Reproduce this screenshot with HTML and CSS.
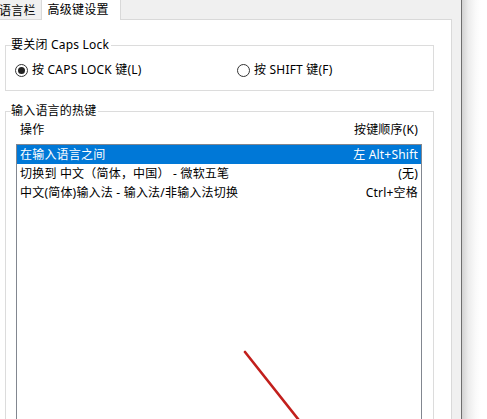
FILE: index.html
```html
<!doctype html>
<html>
	<head>
		<meta charset="utf-8"/>
		<meta name="viewport" content="width=device-width, initial-scale=1" />
		<link rel="stylesheet" href="styles.css">
	</head>
	<body>
		<div class="window">
			<div class="dialog">
				<div class="tabs">
					<div class="tab">语言栏</div>
					<div class="tab tab-active">高级键设置</div>
				</div>
				<div class="page">
					<fieldset class="group">
						<legend>要关闭 Caps Lock</legend>
						<div class="radios">
							<div class="radio-item">
								<span class="radio checked"></span>
								<span>按 CAPS LOCK 键(L)</span>
							</div>
							<div class="radio-item">
								<span class="radio"></span>
								<span>按 SHIFT 键(F)</span>
							</div>
						</div>
					</fieldset>

					<fieldset class="group group-keys">
						<legend>输入语言的热键</legend>
						<div class="list-head">
							<span>操作</span>
							<span>按键顺序(K)</span>
						</div>
						<div class="list">
							<div class="row selected">
								<span>在输入语言之间</span>
								<span>左 Alt+Shift</span>
							</div>
							<div class="row">
								<span>切换到 中文（简体，中国） - 微软五笔</span>
								<span>(无)</span>
							</div>
							<div class="row">
								<span>中文(简体)输入法 - 输入法/非输入法切换</span>
								<span>Ctrl+空格</span>
							</div>
						</div>
					</fieldset>
				</div>
			</div>
			<div class="shade"></div>
		</div>

		<!-- annotation arrow drawn over the screenshot -->
		<svg class="arrow" width="487" height="419" viewBox="0 0 487 419">
			<line x1="245" y1="352" x2="302" y2="424" stroke="#c21f1c" stroke-width="2.6" stroke-linecap="round"/>
		</svg>
	</body>
</html>
```

FILE: styles.css
```css
html, body {
	margin: 0;
	padding: 0;
	background: #fff;
	overflow: hidden;
}

body {
	font-family: "Noto Sans", "Noto Sans CJK SC", sans-serif;
	font-size: 12px;
	letter-spacing: 0.2px;
	color: #000;
	width: 487px;
	height: 419px;
	position: relative;
}

.window {
	display: flex;
	height: 419px;
}

.dialog {
	width: 461px;
	background: #f0f0f0;
	border-right: 1px solid #6e6e6e;
	display: flex;
	flex-direction: column;
}

.shade {
	flex: 1;
	background: linear-gradient(to right, #d2d2d2, #ececec 25%, #fafafa 55%, #fff 75%);
}

.tabs {
	height: 19px;
	display: flex;
	align-items: flex-end;
	margin-left: -6px;
}

.tab {
	height: 17px;
	line-height: 17px;
	padding: 0 5px;
	white-space: nowrap;
}

.tab-active {
	height: 20px;
	line-height: 19px;
	width: 72px;
	padding: 0 0 0 6px;
	background: #fff;
	border: 1px solid #d9d9d9;
	border-bottom: none;
	margin-bottom: -1px;
	position: relative;
	z-index: 1;
}

.page {
	flex: 1;
	background: #fff;
	border-top: 1px solid #d9d9d9;
	border-right: 1px solid #d9d9d9;
	margin-right: 9px;
	overflow: hidden;
}

.group {
	margin: 17px 0 0 5px;
	width: 429px;
	box-sizing: border-box;
	border: 1px solid #dcdcdc;
	padding: 9px 0 12px 5px;
	line-height: 16px;
}

.group legend {
	padding: 0 2px 0 0;
	line-height: 16px;
}

.radios {
	display: grid;
	grid-template-columns: 222px auto;
	margin-left: 4px;
}

.radio-item {
	display: flex;
	align-items: center;
	gap: 4px;
	white-space: nowrap;
}

.radio {
	width: 11px;
	height: 11px;
	border: 1px solid #333;
	border-radius: 50%;
	display: flex;
	align-items: center;
	justify-content: center;
}

.radio.checked::after {
	content: "";
	width: 7px;
	height: 7px;
	border-radius: 50%;
	background: #222;
}

.group-keys {
	margin-top: 12px;
	padding: 3px 11px 0 5px;
	height: 360px;
}

.list-head {
	display: flex;
	justify-content: space-between;
	padding: 0 4px 0 9px;
}

.list {
	margin: 6px 0 0 5px;
	border: 1px solid #828790;
	height: 300px;
}

.row {
	display: flex;
	justify-content: space-between;
	height: 19px;
	line-height: 20px;
	padding: 0 3px;
	white-space: nowrap;
}

.row.selected {
	background: #0078d7;
	color: #fff;
}

.arrow {
	position: absolute;
	left: 0;
	top: 0;
	pointer-events: none;
}
```
